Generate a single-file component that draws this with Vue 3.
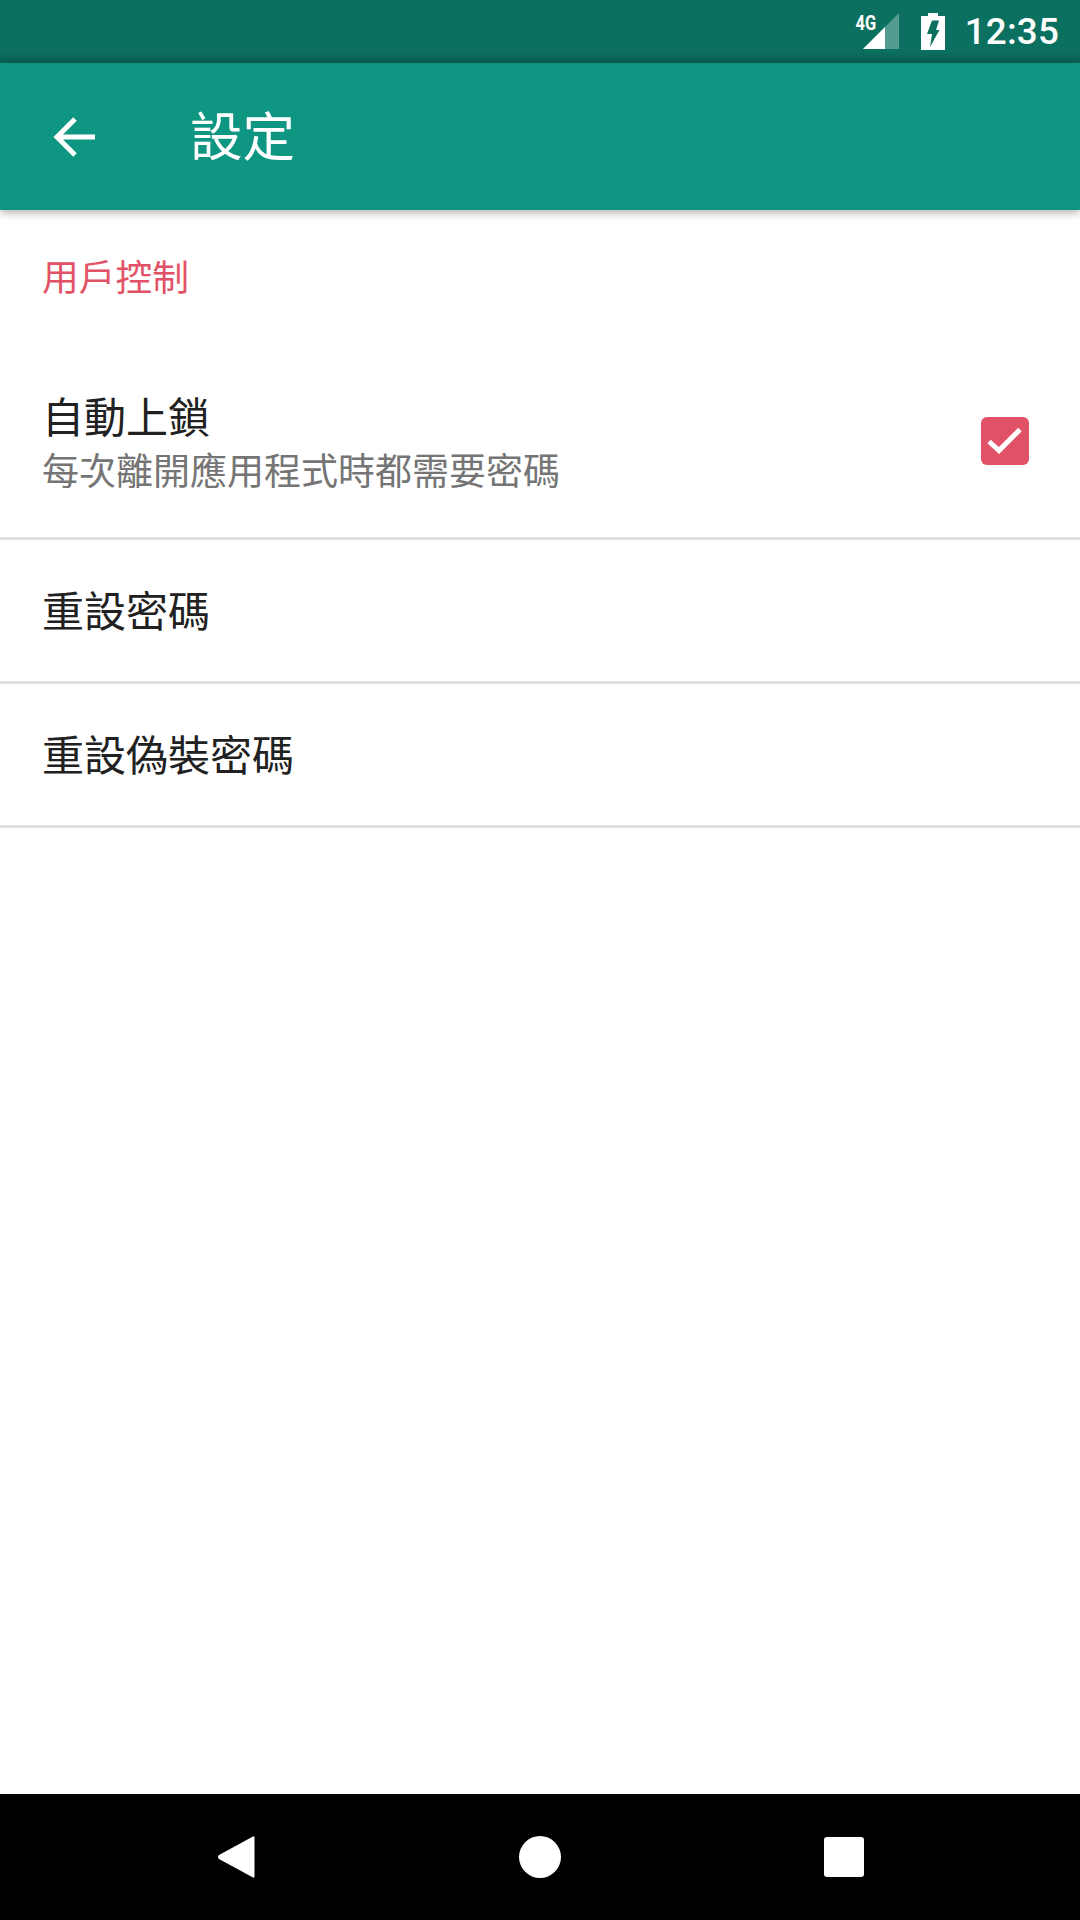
<template>
  <div class="screen">
    <div class="status-bar">
      <div class="signal">
        <span class="net-label">4G</span>
        <svg width="36" height="36" viewBox="0 0 36 36">
          <path d="M36 0V36H0Z" fill="#fff" fill-opacity="0.3" />
          <path d="M22 14V36H0Z" fill="#fff" />
        </svg>
      </div>
      <svg class="battery" width="24" height="37" viewBox="0 0 24 37">
        <path fill-rule="evenodd" fill="#fff" d="M7 0H17V3H24V37H0V3H7ZM11 7.500H18L15 17H18.500L9 34L11 21H6Z" />
      </svg>
      <span class="clock">12:35</span>
    </div>

    <div class="toolbar">
      <svg class="back" width="42" height="42" viewBox="0 0 42 42">
        <path d="M42 21H4M22 3L4 21L22 39" fill="none" stroke="#fff" stroke-width="5" />
      </svg>
      <h1>設定</h1>
    </div>

    <div class="content">
      <div class="section-title">用戶控制</div>

      <div class="row row-first">
        <div class="row-text">
          <div class="row-title">自動上鎖</div>
          <div class="row-sub">每次離開應用程式時都需要密碼</div>
        </div>
        <svg class="check" width="48" height="48" viewBox="0 0 48 48">
          <rect width="48" height="48" rx="6" fill="#e25267" />
          <path d="M8 24.500L18 33.500L39 12.500" fill="none" stroke="#fff" stroke-width="5" />
        </svg>
      </div>

      <div v-for="item in items" :key="item" class="row">
        <div class="row-title">{{ item }}</div>
      </div>
    </div>

    <div class="nav-bar">
      <svg width="38" height="44" viewBox="0 0 38 44">
        <path d="M36 1.500Q37.500 0.500 37.500 3V41Q37.500 43.500 36 42.500L2 24Q0 22 2 20Z" fill="#fff" />
      </svg>
      <span class="home"></span>
      <span class="recent"></span>
    </div>
  </div>
</template>

<script setup>
const items = ['重設密碼', '重設偽裝密碼']
</script>

<style>
html, body {
  margin: 0;
  background: #fff;
}
</style>

<style scoped>
.screen {
  width: 1080px;
  height: 1920px;
  display: flex;
  flex-direction: column;
  background: #fff;
  font-family: "Noto Sans CJK TC", "Noto Sans", sans-serif;
  overflow: hidden;
}

.status-bar {
  height: 63px;
  flex-shrink: 0;
  display: flex;
  align-items: center;
  justify-content: flex-end;
  padding-right: 21px;
  background: linear-gradient(#0b7060 80%, #095f51);
}

.signal {
  position: relative;
  width: 36px;
  height: 36px;
  margin-right: 22px;
  margin-bottom: 1px;
}

.signal svg {
  display: block;
}

.net-label {
  position: absolute;
  right: 23px;
  top: 0;
  color: #fff;
  font-family: Roboto, sans-serif;
  font-weight: 700;
  font-size: 20px;
  line-height: 20px;
  transform: scaleX(0.82);
  transform-origin: right;
}

.battery {
  margin-right: 20px;
  margin-bottom: 1px;
}

.clock {
  color: #fff;
  font-family: Roboto, sans-serif;
  font-weight: 500;
  font-size: 36.75px;
  line-height: 40px;
  letter-spacing: 0.2px;
}

.toolbar {
  height: 147px;
  flex-shrink: 0;
  display: flex;
  align-items: center;
  padding-left: 53px;
  background: #0f9682;
  box-shadow: 0 3px 8px rgba(0, 0, 0, 0.3);
  position: relative;
}

.toolbar h1 {
  margin: 0 0 7px 95px;
  color: #fff;
  font-size: 52.5px;
  font-weight: 400;
  line-height: 70px;
}

.content {
  flex: 1;
  display: flex;
  flex-direction: column;
}

.section-title {
  height: 108px;
  padding: 42px 0 0 42px;
  box-sizing: border-box;
  color: #e25267;
  font-size: 36.75px;
  line-height: 46px;
}

.row {
  height: 144px;
  flex-shrink: 0;
  box-sizing: border-box;
  display: flex;
  align-items: center;
  justify-content: space-between;
  padding: 0 51px 4px 42px;
  border-bottom: 3px solid #e0e0e0;
}

.row-first {
  height: 222px;
  padding-top: 28px;
  padding-bottom: 0;
}

.check {
  margin-bottom: 2px;
}

.row-title {
  color: #212121;
  font-size: 42px;
  line-height: 50px;
}

.row-sub {
  color: #757575;
  font-size: 37px;
  line-height: 50px;
  margin-top: 4px;
}

.nav-bar {
  height: 126px;
  flex-shrink: 0;
  display: flex;
  align-items: center;
  justify-content: space-between;
  padding: 0 216px 0 217px;
  background: #000;
}

.home {
  width: 42px;
  height: 42px;
  border-radius: 50%;
  background: #fff;
}

.recent {
  width: 40px;
  height: 40px;
  border-radius: 3px;
  background: #fff;
}
</style>
